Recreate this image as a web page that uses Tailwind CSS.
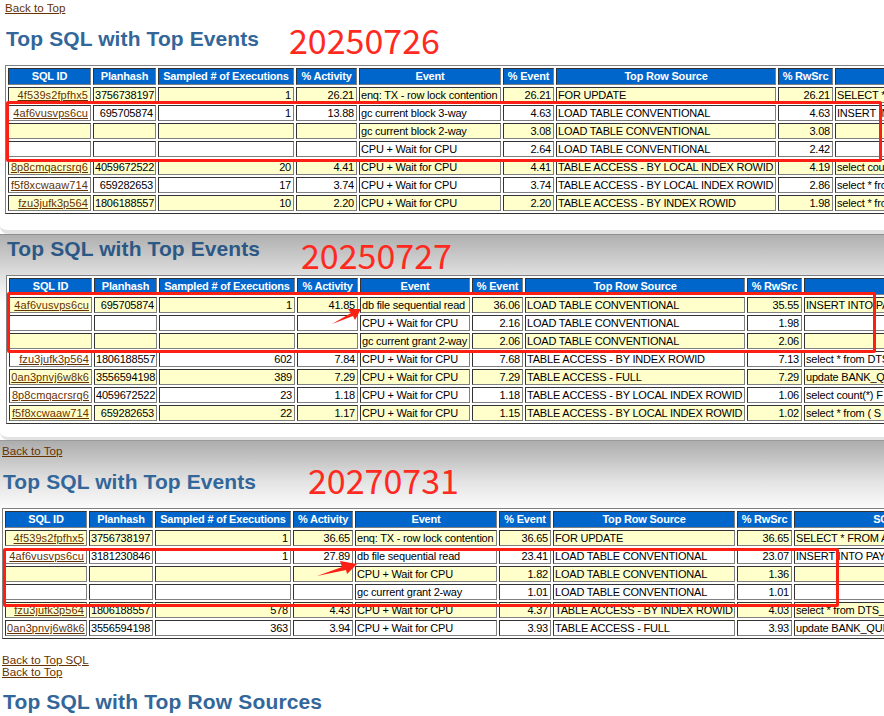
<!DOCTYPE html>
<html lang="en">
<head>
  <meta charset="UTF-8">
  <meta name="viewport" content="width=device-width, initial-scale=1.0">
  <title>Top SQL with Top Events</title>
  <script src="https://cdn.jsdelivr.net/npm/@tailwindcss/browser@4"></script>
</head>
<body class="bg-white">
<div class="relative h-[716px] overflow-hidden font-['Liberation_Sans',Arial,sans-serif] text-[11.6px] leading-[12px] text-black">

  <!-- 20250726 -->
  <section class="h-[234px] pl-[5px] pt-[2px] bg-white border-b-4 border-[#e2e2e2] rounded-bl-lg">
    <a href="#" class="block h-[12px] text-[#663300] underline">Back to Top</a>
    <div class="flex items-center h-[36px] mt-[7px] pl-px">
      <h2 class="w-[283px] font-bold text-[21px] tracking-[0.1px] leading-[36px] text-[#336699]">Top SQL with Top Events</h2>
      <span class="font-['Noto_Sans_CJK_SC',sans-serif] text-[34px] leading-[36px] text-[#ff2a1f] mt-[2px]">20250726</span>
    </div>
    <div class="mt-[8px]" data-table="a"></div>
  </section>

  <!-- 20250727 -->
  <section class="h-[206px] pl-[6px] border-t border-[#8f8f8f] bg-linear-to-b from-[#b0b0b0] via-[#e0e0e0] via-[20%] to-white to-[34%] border-b-3 border-b-[#e2e2e2] rounded-bl-lg">
    <div class="flex items-start h-[36px] pl-px">
      <h2 class="w-[294px] font-bold text-[21px] tracking-[0.1px] leading-[28px] text-[#2b5885]">Top SQL with Top Events</h2>
      <span class="font-['Noto_Sans_CJK_SC',sans-serif] text-[34px] leading-[36px] text-[#ff2a1f] mt-[2px]">20250727</span>
    </div>
    <div class="mt-[4px]" data-table="b"></div>
  </section>

  <!-- 20270731 -->
  <section class="h-[276px] pl-[2px] border-t border-[#9a9a9a] bg-linear-to-b from-[#adadad] via-[#e4e4e4] via-[15%] to-white to-[26%]">
    <a href="#" class="block h-[12px] mt-[4px] text-[#663300] underline">Back to Top</a>
    <div class="flex items-center h-[36px] mt-[7px] pl-px">
      <h2 class="w-[305px] font-bold text-[21px] tracking-[0.1px] leading-[36px] text-[#336699]">Top SQL with Top Events</h2>
      <span class="font-['Noto_Sans_CJK_SC',sans-serif] text-[34px] leading-[36px] text-[#ff2a1f] -mt-[4px]">20270731</span>
    </div>
    <div class="mt-[8px]" data-table="c"></div>
    <a href="#" class="block h-[12px] mt-[15px] text-[#663300] underline">Back to Top SQL</a>
    <a href="#" class="block h-[12px] text-[#663300] underline">Back to Top</a>
    <h2 class="mt-[6px] pl-px font-bold text-[21px] tracking-[0.15px] leading-[36px] text-[#336699]">Top SQL with Top Row Sources</h2>
  </section>

  <!-- hand drawn annotations over the report -->
  <div class="absolute left-[6px] top-[101px] w-[876px] h-[61px] border-3 border-[#fb2013] rounded-[2px]"></div>
  <div class="absolute left-[7px] top-[292px] w-[869px] h-[61px] border-3 border-[#fb2013] rounded-[2px]"></div>
  <div class="absolute left-[3px] top-[548px] w-[836px] h-[59px] border-3 border-[#fb2013] rounded-[2px]"></div>
  <svg class="absolute left-0 top-0" width="884" height="716" viewBox="0 0 884 716" fill="#fb2013">
    <polygon points="332,324 351,313 348,309 361,309 355,320 353,316"/>
    <polygon points="317,576 342,567 340,561 357,564 347,574 346,570"/>
  </svg>
</div>

<script>
  const heads = ["SQL ID", "Planhash", "Sampled # of Executions", "% Activity", "Event", "% Event", "Top Row Source", "% RwSrc", "SQL Text"];

  const tables = {
    a: {
      cols: [83, 63, 136, 61, 142, 51, 220, 55, 240],
      rows: [
        ["4f539s2fpfhx5","3756738197","1","26.21","enq: TX - row lock contention","26.21","FOR UPDATE","26.21","SELECT * FROM A"],
        ["4af6vusvps6cu","695705874","1","13.88","gc current block 3-way","4.63","LOAD TABLE CONVENTIONAL","4.63","INSERT INTO PAY"],
        ["","","","","gc current block 2-way","3.08","LOAD TABLE CONVENTIONAL","3.08",""],
        ["","","","","CPU + Wait for CPU","2.64","LOAD TABLE CONVENTIONAL","2.42",""],
        ["8p8cmqacrsrq6","4059672522","20","4.41","CPU + Wait for CPU","4.41","TABLE ACCESS - BY LOCAL INDEX ROWID","4.19","select count(*) F"],
        ["f5f8xcwaaw714","659282653","17","3.74","CPU + Wait for CPU","3.74","TABLE ACCESS - BY LOCAL INDEX ROWID","2.86","select * from ( S"],
        ["fzu3jufk3p564","1806188557","10","2.20","CPU + Wait for CPU","2.20","TABLE ACCESS - BY INDEX ROWID","1.98","select * from DTS"]
      ]
    },
    b: {
      cols: [83, 63, 136, 61, 110, 51, 220, 55, 240],
      rows: [
        ["4af6vusvps6cu","695705874","1","41.85","db file sequential read","36.06","LOAD TABLE CONVENTIONAL","35.55","INSERT INTO PAY"],
        ["","","","","CPU + Wait for CPU","2.16","LOAD TABLE CONVENTIONAL","1.98",""],
        ["","","","","gc current grant 2-way","2.06","LOAD TABLE CONVENTIONAL","2.06",""],
        ["fzu3jufk3p564","1806188557","602","7.84","CPU + Wait for CPU","7.68","TABLE ACCESS - BY INDEX ROWID","7.13","select * from DTS_"],
        ["0an3pnvj6w8k6","3556594198","389","7.29","CPU + Wait for CPU","7.29","TABLE ACCESS - FULL","7.29","update BANK_QUI"],
        ["8p8cmqacrsrq6","4059672522","23","1.18","CPU + Wait for CPU","1.18","TABLE ACCESS - BY LOCAL INDEX ROWID","1.06","select count(*) F"],
        ["f5f8xcwaaw714","659282653","22","1.17","CPU + Wait for CPU","1.15","TABLE ACCESS - BY LOCAL INDEX ROWID","1.02","select * from ( S"]
      ]
    },
    c: {
      cols: [82, 64, 136, 60, 142, 52, 182, 55, 204],
      rows: [
        ["4f539s2fpfhx5","3756738197","1","36.65","enq: TX - row lock contention","36.65","FOR UPDATE","36.65","SELECT * FROM A"],
        ["4af6vusvps6cu","3181230846","1","27.89","db file sequential read","23.41","LOAD TABLE CONVENTIONAL","23.07","INSERT INTO PAY"],
        ["","","","","CPU + Wait for CPU","1.82","LOAD TABLE CONVENTIONAL","1.36",""],
        ["","","","","gc current grant 2-way","1.01","LOAD TABLE CONVENTIONAL","1.01",""],
        ["fzu3jufk3p564","1806188557","578","4.43","CPU + Wait for CPU","4.37","TABLE ACCESS - BY INDEX ROWID","4.03","select * from DTS_"],
        ["0an3pnvj6w8k6","3556594198","363","3.94","CPU + Wait for CPU","3.93","TABLE ACCESS - FULL","3.93","update BANK_QUI"]
      ]
    }
  };

  const leftCols = [4, 6, 8];
  const cellBorder = "border border-t-[#333333] border-l-[#333333] border-r-[#808080] border-b-[#808080]";

  function renderTable(t) {
    const total = t.cols.reduce((s, c) => s + c + 2, 0) + 4;
    const colgroup = t.cols.map(c => `<col style="width:${c}px">`).join("");
    const head = heads.map(h =>
      `<th class="h-[17px] px-px pt-0 pb-px bg-[#0066cc] text-white text-[11px] tracking-[-0.2px] font-bold text-center whitespace-nowrap ${cellBorder}">${h}</th>`
    ).join("");
    const rows = t.rows.map((r, i) => {
      const bg = i % 2 == 0 ? "bg-[#ffffcc]" : "bg-white";
      const cells = r.map((v, j) => {
        const align = leftCols.includes(j) ? "text-left" : "text-right";
        const text = j == 0 && v ? `<a href="#" class="text-[#663300] underline tracking-[0.1px]">${v}</a>` : v;
        return `<td class="h-[16px] pl-px pr-[2px] py-0 text-[11px] tracking-[-0.2px] whitespace-nowrap ${bg} ${align} ${cellBorder}">${text}</td>`;
      }).join("");
      return `<tr>${cells}</tr>`;
    }).join("");
    return `<table class="table-fixed border-separate border-spacing-[2px] bg-white border border-t-[#808080] border-l-[#808080] border-r-[#333333] border-b-[#333333]" style="width:${total}px">
      <colgroup>${colgroup}</colgroup><thead><tr>${head}</tr></thead><tbody>${rows}</tbody></table>`;
  }

  document.querySelectorAll("[data-table]").forEach(el => {
    el.innerHTML = renderTable(tables[el.dataset.table]);
  });
</script>
</body>
</html>
